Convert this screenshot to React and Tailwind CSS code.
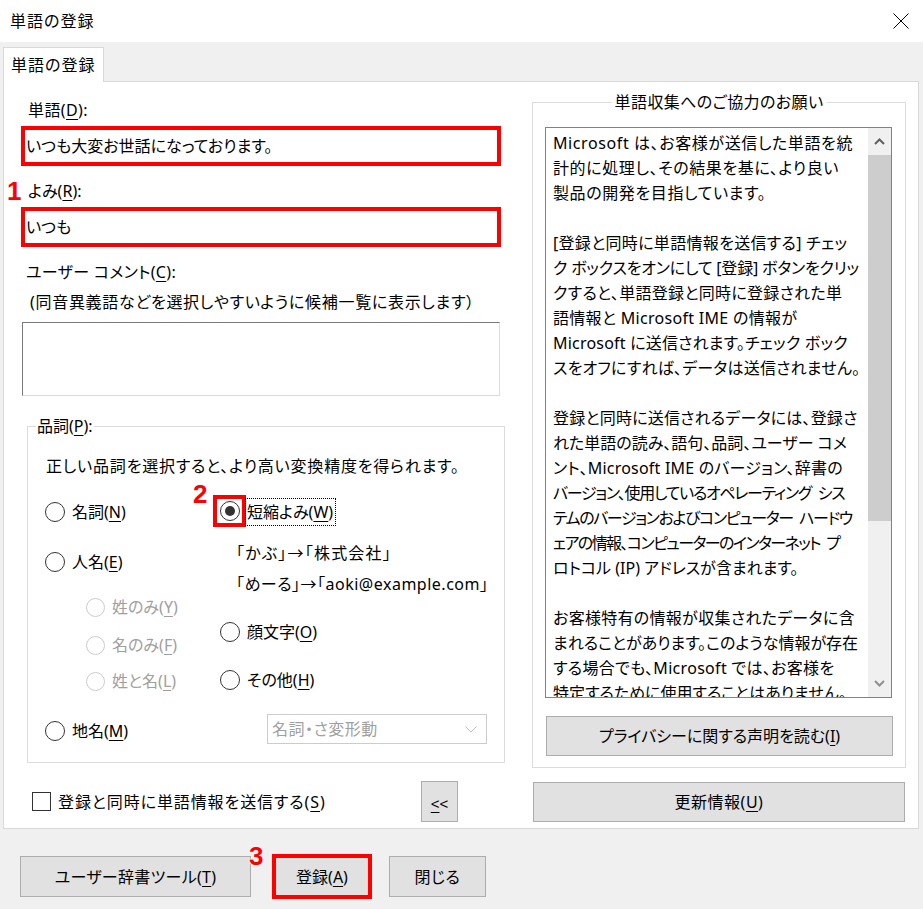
import React from "react";

const U = ({ children }) => (
  <span className="underline decoration-1 underline-offset-[3px]">{children}</span>
);

function Radio({ checked, disabled }) {
  return (
    <span
      className={
        disabled
          ? "w-[19px] h-[19px] rounded-full border border-[#cccccc] bg-white shrink-0"
          : "w-[20px] h-[20px] rounded-full border border-[#333333] bg-white shrink-0 flex items-center justify-center"
      }
    >
      {checked && <span className="w-[10px] h-[10px] rounded-full bg-[#333333]" />}
    </span>
  );
}

function RadioRow({ children, disabled, className }) {
  return (
    <div className={"flex items-center h-[24px] gap-[7px] " + (className || "")}>
      <Radio disabled={disabled} />
      <span className={disabled ? "leading-[24px] text-[#a0a0a0]" : "leading-[24px]"}>{children}</span>
    </div>
  );
}

const lines = [
  { t: "Microsoft は、お客様が送信した単語を統", c: "tracking-[0.6px]" },
  { t: "計的に処理し、その結果を基に、より良い", c: "tracking-[0.6px]" },
  { t: "製品の開発を目指しています。", c: "tracking-[0.6px]" },
  { t: "", c: "" },
  { t: "[登録と同時に単語情報を送信する] チェッ", c: "tracking-[0.3px]" },
  { t: "ク ボックスをオンにして [登録] ボタンをクリッ", c: "tracking-[-0.2px]" },
  { t: "クすると、単語登録と同時に登録された単", c: "tracking-[0.3px]" },
  { t: "語情報と Microsoft IME の情報が", c: "tracking-[0.3px]" },
  { t: "Microsoft に送信されます。チェック ボック", c: "tracking-[0.2px]" },
  { t: "スをオフにすれば、データは送信されません。", c: "tracking-[0.2px]" },
  { t: "", c: "" },
  { t: "登録と同時に送信されるデータには、登録さ", c: "tracking-[0.2px]" },
  { t: "れた単語の読み、語句、品詞、ユーザー コメ", c: "tracking-[0px]" },
  { t: "ント、Microsoft IME のバージョン、辞書の", c: "tracking-[0.2px]" },
  { t: "バージョン、使用しているオペレーティング\u2002シス", c: "tracking-[-1.3px]" },
  { t: "テムのバージョンおよびコンピューター\u2002ハードウ", c: "tracking-[-1.4px]" },
  { t: "ェアの情報、コンピューターのインターネット\u2002プ", c: "tracking-[-1.6px]" },
  { t: "ロトコル (IP) アドレスが含まれます。", c: "tracking-[0px]" },
  { t: "", c: "" },
  { t: "お客様特有の情報が収集されたデータに含", c: "tracking-[0.3px]" },
  { t: "まれることがあります。このような情報が存在", c: "tracking-[0px]" },
  { t: "する場合でも、Microsoft では、お客様を", c: "tracking-[0.3px]" },
  { t: "特定するために使用することはありません。", c: "tracking-[0px]" },
];

export default function App() {
  return (
    <div className="relative w-[923px] h-[909px] bg-[#f0f0f0] text-black text-[16px] font-['Noto_Sans','Noto_Sans_CJK_JP',sans-serif] [font-feature-settings:'palt'] overflow-hidden">
      {/* Title bar */}
      <div className="h-[42px] bg-white flex items-center justify-between pl-[10px] pr-[14px]">
        <span className="leading-[20px] text-[16px] tracking-[1px]">単語の登録</span>
        <svg width="16" height="16" viewBox="0 0 16 16">
          <path d="M0.5 0.5L15.5 15.5M15.5 0.5L0.5 15.5" stroke="#000" strokeWidth="1" />
        </svg>
      </div>

      <div className="pt-[5px] pl-[3px]">
        {/* Tab */}
        <div className="relative z-10 w-[101px] h-[35px] bg-white border border-b-0 border-[#d9d9d9] flex items-center pl-[7px] leading-[22px] tracking-[1px]">
          単語の登録
        </div>
        {/* Panel */}
        <div className="-mt-[1px] w-[916px] h-[748px] bg-white border border-[#d9d9d9] flex">
          {/* Left column */}
          <div className="ml-[17px] w-[484px] pt-[17px] flex flex-col shrink-0">
            <div className="h-[22px] leading-[22px] pl-[7px] tracking-[0.4px]">
              単語(<U>D</U>):
            </div>
            <div className="mt-[5px] w-[480px] h-[40px] border-[4px] border-[#ff0000] bg-white flex items-center pl-[1px] whitespace-nowrap">
              いつも大変お世話になっております。
            </div>
            <div className="mt-[14px] h-[22px] leading-[22px] pl-[7px]">
              よみ(<U>R</U>):
            </div>
            <div className="mt-[5px] w-[480px] h-[40px] border-[4px] border-[#ff0000] bg-white flex items-center pl-[1px]">
              いつも
            </div>
            <div className="mt-[14px] h-[22px] leading-[22px] pl-[5px] tracking-[0.3px]">
              ユーザー コメント(<U>C</U>):
            </div>
            <div className="mt-[8px] h-[22px] leading-[22px] pl-[9px] whitespace-nowrap tracking-[0.7px]">
              (同音異義語などを選択しやすいように候補一覧に表示します）
            </div>
            <div className="mt-[9px] ml-[1px] w-[478px] h-[74px] bg-white border border-t-[#7a7a7a] border-l-[#7a7a7a] border-r-[#dcdcdc] border-b-[#dcdcdc]" />

            {/* 品詞 group */}
            <div className="relative mt-[30px] ml-[6px] w-[478px] h-[337px] border border-[#dcdcdc] flex flex-col">
              <span className="absolute left-[8px] -top-[12px] bg-white px-[1px] h-[22px] leading-[22px]">
                品詞(<U>P</U>):
              </span>
              <div className="mt-[28px] pl-[18px] h-[22px] leading-[22px] whitespace-nowrap tracking-[0.8px]">
                正しい品詞を選択すると、より高い変換精度を得られます。
              </div>
              <div className="mt-[18px] flex">
                <div className="pl-[17px] w-[185px] pt-[5px] flex flex-col">
                  <RadioRow>
                    名詞(<U>N</U>)
                  </RadioRow>
                  <RadioRow className="mt-[26px]">
                    人名(<U>E</U>)
                  </RadioRow>
                  <RadioRow disabled className="mt-[21px] ml-[41px]">
                    姓のみ(<U>Y</U>)
                  </RadioRow>
                  <RadioRow disabled className="mt-[14px] ml-[41px]">
                    名のみ(<U>F</U>)
                  </RadioRow>
                  <RadioRow disabled className="mt-[12px] ml-[41px]">
                    姓と名(<U>L</U>)
                  </RadioRow>
                  <RadioRow className="mt-[26px]">
                    地名(<U>M</U>)
                  </RadioRow>
                </div>
                <div className="flex flex-col">
                  <div className="flex items-start">
                    <div className="w-[33px] h-[32px] border-[4px] border-[#ff0000] flex items-center justify-center">
                      <Radio checked />
                    </div>
                    <div className="mt-[3px] -ml-[1px] h-[28px] border border-dotted border-[#000] flex items-center pl-[1px] pr-[2px] leading-[24px] whitespace-nowrap">
                      短縮よみ(<U>W</U>)
                    </div>
                  </div>
                  <div className="mt-[14px] pl-[23px] h-[24px] leading-[24px] whitespace-nowrap tracking-[1.2px]">
                    「かぶ」→「株式会社」
                  </div>
                  <div className="mt-[7px] pl-[23px] h-[24px] leading-[24px] whitespace-nowrap tracking-[0.5px]">
                    「めーる」→「aoki@example.com」
                  </div>
                  <RadioRow className="mt-[24px] ml-[7px]">
                    顔文字(<U>O</U>)
                  </RadioRow>
                  <RadioRow className="mt-[24px] ml-[7px]">
                    その他(<U>H</U>)
                  </RadioRow>
                  <div className="mt-[22px] ml-[54px] w-[220px] h-[30px] border border-[#cccccc] bg-white flex items-center justify-between pl-[4px] pr-[9px] text-[#a0a0a0]">
                    <span className="leading-[22px] tracking-[0.5px]">名詞・さ変形動</span>
                    <svg width="12" height="7" viewBox="0 0 12 7">
                      <path d="M0.5 0.5L6 6L11.5 0.5" stroke="#c0c0c0" strokeWidth="1" fill="none" />
                    </svg>
                  </div>
                </div>
              </div>
            </div>

            {/* checkbox row */}
            <div className="mt-[18px] h-[41px] flex items-center">
              <span className="ml-[11px] w-[19px] h-[19px] border border-[#333333] bg-white shrink-0" />
              <span className="ml-[7px] leading-[22px] whitespace-nowrap tracking-[0.9px]">
                登録と同時に単語情報を送信する(<U>S</U>)
              </span>
              <div className="ml-auto mr-[47px] w-[37px] h-[41px] bg-[#e1e1e1] border border-[#adadad] flex items-center justify-center leading-[20px] pt-[4px] font-['Liberation_Sans',sans-serif] text-[15px]">
                <U>&lt;</U>&lt;
              </div>
            </div>
          </div>

          {/* Right column */}
          <div className="ml-[27px] w-[374px] pt-[20px] flex flex-col shrink-0">
            <div className="relative w-[374px] h-[666px] border border-[#dcdcdc] flex flex-col">
              <span className="absolute left-1/2 -translate-x-1/2 -top-[12px] bg-white px-[3px] h-[22px] leading-[22px] whitespace-nowrap tracking-[0.4px]">
                単語収集へのご協力のお願い
              </span>
              <div className="mt-[24px] ml-[12px] w-[347px] h-[571px] border border-[#828282] bg-white flex overflow-hidden">
                <div className="flex-1 pl-[7px] pt-[3px] overflow-hidden">
                  {lines.map((l, i) => (
                    <div key={i} className={"h-[25px] leading-[25px] whitespace-nowrap " + l.c}>
                      {l.t || "\u00a0"}
                    </div>
                  ))}
                </div>
                <div className="w-[23px] h-full bg-[#f0f0f0] flex flex-col shrink-0">
                  <div className="h-[27px] flex items-center justify-center">
                    <svg width="11" height="7" viewBox="0 0 11 7">
                      <path d="M1 6L5.5 1.5L10 6" stroke="#606060" strokeWidth="2" fill="none" />
                    </svg>
                  </div>
                  <div className="h-[366px] bg-[#cdcdcd]" />
                  <div className="flex-1" />
                  <div className="h-[27px] flex items-center justify-center">
                    <svg width="11" height="7" viewBox="0 0 11 7">
                      <path d="M1 1L5.5 5.5L10 1" stroke="#909090" strokeWidth="2" fill="none" />
                    </svg>
                  </div>
                </div>
              </div>
              <div className="mt-[18px] ml-[13px] w-[347px] h-[40px] bg-[#e1e1e1] border border-[#adadad] flex items-center justify-center leading-[22px] whitespace-nowrap">
                プライバシーに関する声明を読む(<U>I</U>)
              </div>
            </div>
            <div className="mt-[14px] ml-[1px] w-[372px] h-[40px] bg-[#e1e1e1] border border-[#adadad] flex items-center justify-center leading-[22px] tracking-[0.5px]">
              更新情報(<U>U</U>)
            </div>
          </div>
        </div>

        {/* bottom buttons */}
        <div className="mt-[27px] ml-[17px] flex items-start">
          <div className="w-[231px] h-[41px] bg-[#e1e1e1] border border-[#adadad] flex items-center justify-center leading-[22px] whitespace-nowrap tracking-[0.3px]">
            ユーザー辞書ツール(<U>T</U>)
          </div>
          <div className="ml-[21px] -mt-[2px] w-[100px] h-[45px] border-[4px] border-[#ff0000] bg-[#e1e1e1] flex items-center justify-center leading-[22px]">
            登録(<U>A</U>)
          </div>
          <div className="ml-[17px] w-[97px] h-[41px] bg-[#e1e1e1] border border-[#adadad] flex items-center justify-center leading-[22px] tracking-[0.5px]">
            閉じる
          </div>
        </div>
      </div>

      {/* annotation numbers */}
      <span className="absolute left-[7px] top-[176px] text-[26px] leading-[30px] font-bold text-[#ff0000] font-['Liberation_Sans',sans-serif] [font-feature-settings:normal]">
        1
      </span>
      <span className="absolute left-[193px] top-[479px] text-[26px] leading-[30px] font-bold text-[#ff0000] font-['Liberation_Sans',sans-serif] [font-feature-settings:normal]">
        2
      </span>
      <span className="absolute left-[249px] top-[841px] text-[26px] leading-[30px] font-bold text-[#ff0000] font-['Liberation_Sans',sans-serif] [font-feature-settings:normal] [text-shadow:0_0_2px_#fff,0_0_2px_#fff,0_0_2px_#fff]">
        3
      </span>
    </div>
  );
}
